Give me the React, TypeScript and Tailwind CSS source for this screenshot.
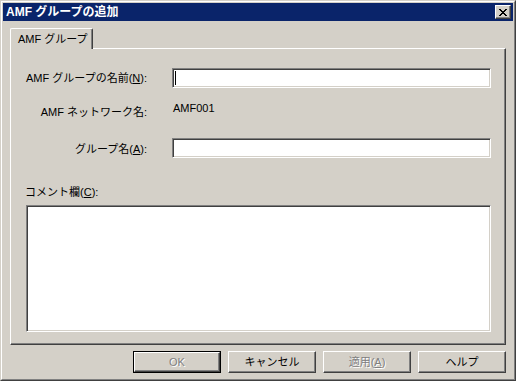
import * as React from 'react';

const sunken =
  'border border-t-[#808080] border-l-[#808080] border-r-white border-b-white bg-white shadow-[inset_1px_1px_0_#404040,inset_-1px_-1px_0_#d4d0c8]';

function Btn({ label, disabled, isDefault }: { label: React.ReactNode; disabled?: boolean; isDefault?: boolean }) {
  const inner = (
    <div
      className={
        'flex h-full w-full items-center justify-center border border-t-white border-l-white border-r-[#404040] border-b-[#404040] shadow-[inset_-1px_-1px_0_#808080] ' +
        (disabled ? 'text-[#808080] [text-shadow:1px_1px_0_#ffffff]' : 'text-black')
      }
    >
      {label}
    </div>
  );
  return (
    <div className={'h-[22px] w-[88px] ' + (isDefault ? 'border border-black' : '')}>
      {inner}
    </div>
  );
}

export default function App() {
  return (
    <div className="h-[381px] w-[516px] border border-t-[#d4d0c8] border-l-[#d4d0c8] border-r-[#404040] border-b-[#404040] bg-[#d4d0c8] font-['Liberation_Sans','Noto_Sans_CJK_JP',sans-serif] text-[11px] text-black">
      <div className="flex h-full flex-col border border-t-white border-l-white border-r-[#808080] border-b-[#808080] p-px">
        {/* Title bar */}
        <div className="flex h-[18px] shrink-0 items-center justify-between bg-[#0a246a] pl-[3px] pr-[2px]">
          <span className="text-[12px] font-bold leading-none text-white">AMF グループの追加</span>
          <div className="flex h-[14px] w-[16px] items-center justify-center border border-t-white border-l-white border-r-[#404040] border-b-[#404040] bg-[#d4d0c8] shadow-[inset_-1px_-1px_0_#808080]">
            <svg width="8" height="7" viewBox="0 0 8 7" shapeRendering="crispEdges">
              <path d="M0 0h2v1h-2zM6 0h2v1h-2zM1 1h2v1h-2zM5 1h2v1h-2zM2 2h4v1h-4zM3 3h2v1h-2zM2 4h4v1h-4zM1 5h2v1h-2zM5 5h2v1h-2zM0 6h2v1h-2zM6 6h2v1h-2z" fill="#000" />
            </svg>
          </div>
        </div>

        <div className="px-[7px] pt-[7px]">
          {/* Tab header */}
          <div className="flex">
            <div className="relative z-10 -mb-px flex h-[21px] w-[83px] items-start rounded-tl-[2px] rounded-tr-[2px] border border-b-0 border-t-white border-l-white border-r-[#404040] bg-[#d4d0c8] pl-[7px] pt-[3px] shadow-[inset_-1px_0_0_#808080]">
              <span className="leading-[14px]">AMF グループ</span>
            </div>
          </div>

          {/* Tab panel */}
          <div className="h-[297px] border border-t-white border-l-white border-r-[#404040] border-b-[#404040] shadow-[inset_-1px_-1px_0_#808080]">
            <div className="mt-[19px] flex h-[20px] items-center">
              <span className="w-[136px] text-right">
                AMF グループの名前(<u className="underline-offset-1">N</u>):
              </span>
              <div className={'ml-[25px] flex h-[20px] w-[319px] items-center pl-[2px] ' + sunken}>
                <span className="h-[14px] w-px bg-black" />
              </div>
            </div>

            <div className="mt-[14px] flex items-start">
              <span className="w-[136px] pt-[4px] text-right leading-[13px]">AMF ネットワーク名:</span>
              <span className="ml-[26px] leading-[13px]">AMF001</span>
            </div>

            <div className="mt-[19px] flex h-[20px] items-center">
              <span className="w-[136px] pt-[3px] text-right">
                グループ名(<u className="underline-offset-1">A</u>):
              </span>
              <div className={'ml-[25px] h-[20px] w-[319px] ' + sunken} />
            </div>

            <div className="ml-[14px] mt-[27px] leading-[14px]">
              コメント欄(<u className="underline-offset-1">C</u>):
            </div>
            <div className={'ml-[15px] mt-[6px] h-[127px] w-[465px] ' + sunken} />
          </div>

          {/* Buttons */}
          <div className="mt-[6px] flex justify-end gap-[7px] pr-[0px]">
            <Btn label="OK" disabled isDefault />
            <Btn label="キャンセル" />
            <Btn
              label={
                <>
                  適用(<u className="underline-offset-1">A</u>)
                </>
              }
              disabled
            />
            <Btn label="ヘルプ" />
          </div>
        </div>
      </div>
    </div>
  );
}
